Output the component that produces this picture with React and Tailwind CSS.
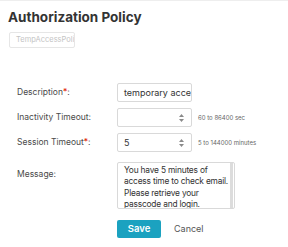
import React from "react";

function Spinner() {
  return (
    <svg width="7" height="10" viewBox="0 0 7 10" className="absolute right-[6px] top-1/2 -translate-y-1/2">
      <path d="M3.5 1 L6 4 L1 4 Z" fill="#8a8a8a" />
      <path d="M3.5 9 L6 6 L1 6 Z" fill="#8a8a8a" />
    </svg>
  );
}

function App() {
  return (
    <div className="w-[288px] h-[247px] bg-white border-t border-[#eeeeee] overflow-hidden" style={{ fontFamily: "Inter, 'Liberation Sans', sans-serif" }}>
      <h1 className="ml-[8px] mt-[8px] text-[13.5px] leading-[16px] font-bold text-[#333333]">Authorization Policy</h1>
      <div className="ml-[9px] mt-[7px] w-[66px] h-[16px] border border-[#e6e6e6] rounded-[2px] px-[6px] text-[7.5px] leading-[14px] text-[#c4c4c4] overflow-hidden whitespace-nowrap">
        TempAccessPolicy
      </div>

      <div className="mt-[35px] ml-[17px] grid grid-cols-[100px_auto] items-center gap-y-[6px] text-[8.5px] text-[#4a4a4a]">
        <div>Description<span className="text-[#e12200]">*</span>:</div>
        <div className="w-[75px] h-[19px] border border-[#d9d9d9] rounded-[2px] px-[6px] leading-[17px] text-[9px] text-[#333333] overflow-hidden whitespace-nowrap">
          temporary access
        </div>

        <div>Inactivity Timeout:</div>
        <div className="flex items-center">
          <div className="relative w-[75px] h-[19px] border border-[#d9d9d9] rounded-[2px]">
            <Spinner />
          </div>
          <span className="ml-[6px] text-[6px] text-[#666666]">60 to 86400 sec</span>
        </div>

        <div>Session Timeout<span className="text-[#e12200]">*</span>:</div>
        <div className="flex items-center">
          <div className="relative w-[75px] h-[19px] border border-[#d9d9d9] rounded-[2px] px-[6px] leading-[17px] text-[9px] text-[#333333]">
            5
            <Spinner />
          </div>
          <span className="ml-[6px] text-[6px] text-[#666666]">5 to 144000 minutes</span>
        </div>

        <div className="self-start mt-[6px] pt-[4px]">Message:</div>
        <div className="mt-[4px] flex w-[118px] h-[47px] border border-[#d9d9d9] rounded-[2px] overflow-hidden">
          <div className="flex-1 pl-[6px] pt-[2px] text-[8.4px] tracking-[-0.2px] leading-[11.3px] text-[#333333] whitespace-nowrap overflow-hidden">
            You have 5 minutes of
            <br />
            access time to check email.
            <br />
            Please retrieve your
            <br />
            passcode and login.
          </div>
          <div className="w-[3px] bg-[#dcdcdc] mr-[1px]" />
        </div>

        <div />
        <div className="mt-[5px] flex items-center">
          <div className="w-[44px] h-[18px] rounded-[2px] bg-[#1ba2c0] text-white text-[9.5px] font-semibold flex items-center justify-center">Save</div>
          <div className="ml-[13px] text-[9px] text-[#555555]">Cancel</div>
        </div>
      </div>
    </div>
  );
}

export default App;
